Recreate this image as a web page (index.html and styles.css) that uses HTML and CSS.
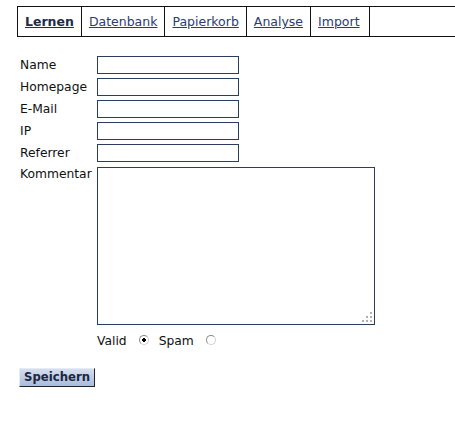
FILE: index.html
```html
<!DOCTYPE html>
<html>
<head>
<meta charset="utf-8">
<link rel="stylesheet" href="styles.css">
</head>
<body>
<nav class="tabs">
  <a class="tab tab-active" href="#">Lernen</a>
  <a class="tab" href="#">Datenbank</a>
  <a class="tab" href="#">Papierkorb</a>
  <a class="tab" href="#">Analyse</a>
  <a class="tab tab-last" href="#">Import</a>
  <span class="tab-fill"></span>
</nav>
<form class="form">
  <label class="label">Name</label><input class="field" type="text">
  <label class="label">Homepage</label><input class="field" type="text">
  <label class="label">E-Mail</label><input class="field" type="text">
  <label class="label">IP</label><input class="field" type="text">
  <label class="label">Referrer</label><input class="field" type="text">
  <label class="label label-top">Kommentar</label>
  <div class="area-wrap">
    <textarea class="area"></textarea>
    <svg class="grip" width="10" height="10" viewBox="0 0 10 10">
      <rect x="8" y="0" width="2" height="2" fill="#b0b0b0"/>
      <rect x="4" y="4" width="2" height="2" fill="#b0b0b0"/>
      <rect x="8" y="4" width="2" height="2" fill="#b0b0b0"/>
      <rect x="0" y="8" width="2" height="2" fill="#b0b0b0"/>
      <rect x="4" y="8" width="2" height="2" fill="#b0b0b0"/>
      <rect x="8" y="8" width="2" height="2" fill="#b0b0b0"/>
    </svg>
  </div>
  <span></span>
  <div class="radios">
    <span class="rlabel">Valid</span><input class="radio" type="radio" name="t" checked>
    <span class="rlabel">Spam</span><input class="radio" type="radio" name="t">
  </div>
</form>
<div class="actions">
  <button class="btn" type="button">Speichern</button>
</div>
</body>
</html>
```
FILE: styles.css
```css
html, body {
  margin: 0;
  padding: 0;
  overflow: hidden;
  background: #fff;
}
body {
  font-family: "DejaVu Sans", Verdana, sans-serif;
  color: #111;
  padding-top: 6px;
}
.tabs {
  display: flex;
  margin-left: 17px;
  width: 437px;
  height: 29px;
  border: 1px solid #111;
}
.tab {
  display: flex;
  align-items: center;
  padding: 0 7px;
  border-right: 1px solid #111;
  font-size: 12.5px;
  color: #2b3c70;
  text-decoration: underline;
}
.tab-active {
  font-weight: bold;
  color: #1e2b4a;
}
.tab-last {
  padding-right: 9px;
}
.tab-fill {
  flex: 1;
}
.form {
  display: grid;
  grid-template-columns: 77px auto;
  justify-content: start;
  row-gap: 4px;
  margin: 19px 0 0 20px;
  font-size: 12.3px;
}
.label {
  display: flex;
  align-items: center;
  height: 18px;
}
.label-top {
  align-items: flex-start;
  margin-top: 1px;
}
.field {
  box-sizing: border-box;
  width: 142px;
  height: 18px;
  margin: 0;
  border: 1px solid #2a3d5e;
  padding: 0 2px;
  background: #fff;
}
.area-wrap {
  position: relative;
  width: 278px;
  height: 158px;
  margin-top: 1px;
}
.area {
  box-sizing: border-box;
  display: block;
  width: 278px;
  height: 158px;
  margin: 0;
  border: 1px solid #2a3d5e;
  resize: none;
  background: #fff;
}
.grip {
  position: absolute;
  right: 3px;
  bottom: 3px;
}
.radios {
  display: flex;
  align-items: center;
  height: 18px;
  margin-top: 3px;
}
.rlabel {
  line-height: 18px;
}
.radio {
  appearance: none;
  -webkit-appearance: none;
  box-sizing: border-box;
  width: 10px;
  height: 10px;
  margin: 0 10px 3px 12px;
  border: 1px solid #8a8a8a;
  border-right-color: #d0d0d0;
  border-bottom-color: #d0d0d0;
  border-radius: 50%;
  background: #fff;
}
.radio:checked {
  background: radial-gradient(circle, #000 0 1.6px, #fff 2px);
}
.actions {
  margin: 16px 0 0 19px;
}
.btn {
  box-sizing: border-box;
  width: 76px;
  height: 19px;
  padding: 0;
  font-family: "DejaVu Sans", Verdana, sans-serif;
  font-weight: bold;
  font-size: 11.7px;
  color: #1c2640;
  background: linear-gradient(#d4deee, #a9bcdb);
  border: 1px solid;
  border-color: #e6ecf6 #222 #222 #e6ecf6;
}
```
